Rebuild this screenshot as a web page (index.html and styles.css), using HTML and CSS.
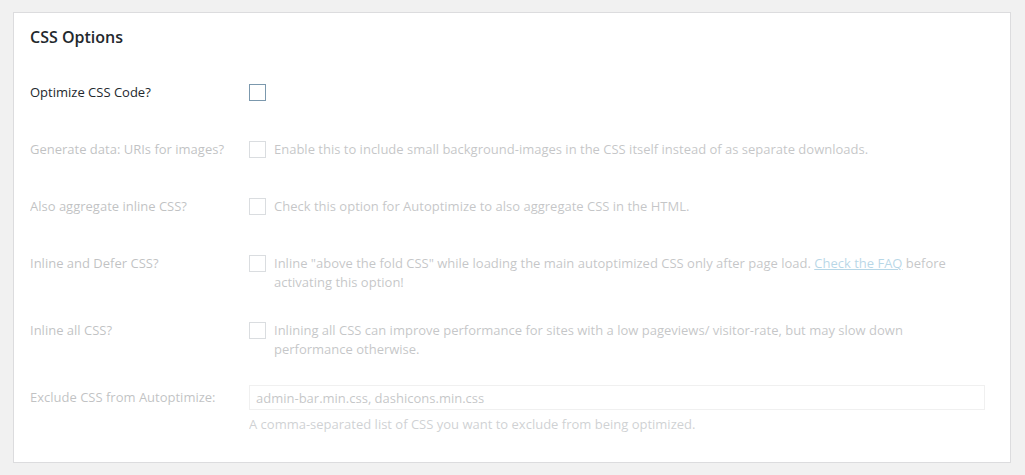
FILE: index.html
```html
<!DOCTYPE html>
<html lang="en">
<head>
  <meta charset="UTF-8">
  <title>CSS Options</title>
  <link rel="stylesheet" href="styles.css">
</head>
<body>
  <div class="postbox">
    <h2>CSS Options</h2>

    <div class="form-table">
      <div class="row row-first">
        <div class="th">Optimize CSS Code?</div>
        <div class="td"><span class="check check-active"></span></div>
      </div>

      <div class="row disabled">
        <div class="th">Generate data: URIs for images?</div>
        <div class="td opt">
          <span class="check"></span>
          <span class="desc">Enable this to include small background-images in the CSS itself instead of as separate downloads.</span>
        </div>
      </div>

      <div class="row disabled">
        <div class="th">Also aggregate inline CSS?</div>
        <div class="td opt">
          <span class="check"></span>
          <span class="desc">Check this option for Autoptimize to also aggregate CSS in the HTML.</span>
        </div>
      </div>

      <div class="row disabled">
        <div class="th">Inline and Defer CSS?</div>
        <div class="td opt">
          <span class="check"></span>
          <span class="desc">Inline "above the fold CSS" while loading the main autoptimized CSS only after page load. <a href="#">Check the FAQ</a> before activating this option!</span>
        </div>
      </div>

      <div class="row disabled">
        <div class="th">Inline all CSS?</div>
        <div class="td opt">
          <span class="check"></span>
          <span class="desc">Inlining all CSS can improve performance for sites with a low pageviews/ visitor-rate, but may slow down performance otherwise.</span>
        </div>
      </div>

      <div class="row disabled">
        <div class="th">Exclude CSS from Autoptimize:</div>
        <div class="td">
          <input type="text" value="admin-bar.min.css, dashicons.min.css">
          <p class="note">A comma-separated list of CSS you want to exclude from being optimized.</p>
        </div>
      </div>
    </div>
  </div>
</body>
</html>
```

FILE: styles.css
```css
*, *::before, *::after {
  box-sizing: border-box;
}

body {
  margin: 0;
  padding: 12px 14px 12px 13px;
  background-color: #f1f1f1;
  font-family: 'Open Sans', 'Noto Sans', sans-serif;
  font-size: 13px;
  color: #23282d;
}

.postbox {
  height: 451px;
  background-color: #fff;
  border: 1px solid #dcdcde;
  padding: 0 16px;
}

h2 {
  margin: 0;
  padding: 14px 0 0;
  font-size: 16px;
  font-weight: 600;
  line-height: 20px;
}

.row {
  display: grid;
  grid-template-columns: 219px 1fr;
  align-items: start;
}

.row-first {
  margin-top: 17px;
}

.th {
  padding: 19px 0;
  line-height: 19px;
}

.td {
  padding: 19px 9px 10px 0;
  line-height: 19px;
}

.opt {
  display: flex;
  align-items: flex-start;
  gap: 8px;
}

.check {
  flex-shrink: 0;
  display: block;
  width: 17px;
  height: 17px;
  margin-top: 1px;
  border: 1px solid #dadde0;
  background-color: #fff;
}

.check-active {
  border-color: #7b98ad;
}

.disabled .th,
.disabled .desc,
.disabled .note,
.disabled input {
  opacity: 0.28;
}

.desc {
  color: #32373c;
}

.desc a {
  color: #0073aa;
}

input {
  display: block;
  width: 100%;
  height: 25px;
  margin: -3px 0 0;
  padding: 0 6px;
  border: 1px solid #ccc;
  font-family: inherit;
  font-size: 13px;
  color: #32373c;
}

.note {
  margin: 5px 0 0;
  color: #555d66;
}
```
